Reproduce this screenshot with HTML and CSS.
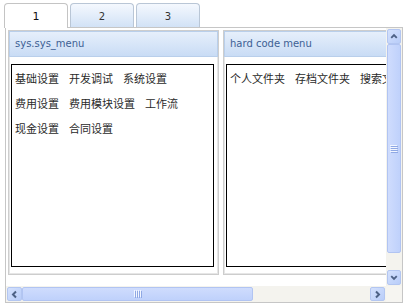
FILE: index.html
```html
<!DOCTYPE html>
<html>
<head>
<meta charset="utf-8">
<link rel="stylesheet" href="styles.css">
</head>
<body>
<div class="tabs">
  <div class="tab active">1</div>
  <div class="tab">2</div>
  <div class="tab">3</div>
</div>
<div class="tabbody">
  <div class="scroller">
    <div class="viewport">
      <div class="canvas">
        <div class="panel">
          <div class="phead">sys.sys_menu</div>
          <div class="pbody">
            <div class="menubox">
              <div class="row"><span class="item">基础设置</span><span class="item">开发调试</span><span class="item">系统设置</span></div>
              <div class="row"><span class="item">费用设置</span><span class="item">费用模块设置</span><span class="item">工作流</span></div>
              <div class="row"><span class="item">现金设置</span><span class="item">合同设置</span></div>
            </div>
          </div>
        </div>
        <div class="panel">
          <div class="phead">hard code menu</div>
          <div class="pbody">
            <div class="menubox">
              <div class="row"><span class="item">个人文件夹</span><span class="item">存档文件夹</span><span class="item">搜索文件</span></div>
            </div>
          </div>
        </div>
      </div>
    </div>
    <div class="vbar">
      <div class="sbtn"><svg width="13" height="13" viewBox="0 0 13 13"><polyline points="3.5,8 6.5,5 9.5,8" fill="none" stroke="#4d6185" stroke-width="2"/></svg></div>
      <div class="vthumb"><svg width="8" height="8" viewBox="0 0 8 8"><path d="M0 0.5H7M0 2.5H7M0 4.5H7M0 6.5H7" stroke="#f2f6ff" stroke-width="1"/><path d="M1 1.5H8M1 3.5H8M1 5.5H8M1 7.5H8" stroke="#8fa8e4" stroke-width="1"/></svg></div>
      <div class="track"></div>
      <div class="sbtn"><svg width="13" height="13" viewBox="0 0 13 13"><polyline points="3.5,5 6.5,8 9.5,5" fill="none" stroke="#4d6185" stroke-width="2"/></svg></div>
    </div>
    <div class="hbar">
      <div class="sbtn"><svg width="13" height="13" viewBox="0 0 13 13"><polyline points="8,3.5 5,6.5 8,9.5" fill="none" stroke="#4d6185" stroke-width="2"/></svg></div>
      <div class="hthumb"><svg width="8" height="8" viewBox="0 0 8 8"><path d="M0.5 0V7M2.5 0V7M4.5 0V7M6.5 0V7" stroke="#f2f6ff" stroke-width="1"/><path d="M1.5 1V8M3.5 1V8M5.5 1V8M7.5 1V8" stroke="#8fa8e4" stroke-width="1"/></svg></div>
      <div class="track"></div>
      <div class="sbtn"><svg width="13" height="13" viewBox="0 0 13 13"><polyline points="5,3.5 8,6.5 5,9.5" fill="none" stroke="#4d6185" stroke-width="2"/></svg></div>
    </div>
    <div class="corner"></div>
  </div>
</div>
</body>
</html>
```
FILE: styles.css
```css
html, body {
  margin: 0;
  padding: 0;
  background: #fff;
  font-family: "DejaVu Sans", "Noto Sans CJK SC", sans-serif;
}

.tabs {
  display: flex;
  gap: 2px;
  margin-left: 4px;
  padding-top: 3px;
  height: 24px;
  position: relative;
  z-index: 1;
}

.tab {
  box-sizing: border-box;
  width: 64px;
  height: 24px;
  border: 1px solid #b9c6d6;
  border-bottom: none;
  border-radius: 4px 4px 0 0;
  background: linear-gradient(#f4f8fe, #d2e2f6);
  text-align: center;
  font-size: 10px;
  color: #333;
  padding-top: 5px;
  line-height: 16px;
}

.tab.active {
  height: 25px;
  background: #fff;
  border-color: #c4c4c4;
  color: #111;
  font-size: 11px;
}

.tabbody {
  box-sizing: border-box;
  margin-left: 5px;
  width: 398px;
  height: 276px;
  border: 1px solid #c6c6c6;
}

.scroller {
  display: grid;
  grid-template-columns: 1fr 16px;
  grid-template-rows: 1fr 16px;
  height: 100%;
}

.viewport {
  overflow: hidden;
}

.canvas {
  display: flex;
  gap: 4px;
  padding: 2px 0 0 2px;
  width: 600px;
}

.panel {
  box-sizing: border-box;
  width: 211px;
  height: 245px;
  border: 1px solid #cdcdcd;
  display: flex;
  flex-direction: column;
  flex: none;
}

.phead {
  box-sizing: border-box;
  height: 26px;
  border: 1px solid #b9cfeb;
  background: linear-gradient(#e6effb, #c9dcf5);
  padding-left: 5px;
  line-height: 24px;
  font-size: 10px;
  color: #3d5f94;
}

.pbody {
  flex: 1;
  padding: 7px 4px 0 1px;
  border: 1px solid #e6e6e6;
  border-top: none;
}

.menubox {
  box-sizing: border-box;
  width: 203px;
  height: 203px;
  border: 1px solid #000;
  padding-left: 3px;
  overflow: hidden;
}

.row {
  height: 25px;
  line-height: 25px;
  white-space: nowrap;
}

.item {
  font-family: "Noto Sans CJK SC", sans-serif;
  font-size: 11px;
  color: #2a2a2a;
  margin-right: 10px;
}

.vbar, .hbar {
  background: #f4f3ee;
  display: flex;
  padding: 1px;
}

.vbar {
  flex-direction: column;
}

.sbtn {
  box-sizing: border-box;
  width: 14px;
  height: 14px;
  flex: none;
  border: 1px solid #b3c6f1;
  border-radius: 2px;
  background: linear-gradient(135deg, #d4e1fd, #b9cdf9);
  display: flex;
  align-items: center;
  justify-content: center;
}

.vbar .sbtn {
  height: 15px;
}

.hbar .sbtn {
  width: 15px;
}

.vthumb, .hthumb {
  box-sizing: border-box;
  flex: none;
  border: 1px solid #b1c4f2;
  border-radius: 2px;
  display: flex;
  align-items: center;
  justify-content: center;
}

.vthumb {
  width: 14px;
  height: 209px;
  background: linear-gradient(90deg, #cfdcfd, #bfd1fb);
}

.hthumb {
  height: 14px;
  width: 231px;
  background: linear-gradient(#cfdcfd, #bfd1fb);
}

.track {
  flex: 1;
}

.corner {
  background: #f6f5f1;
}
```
